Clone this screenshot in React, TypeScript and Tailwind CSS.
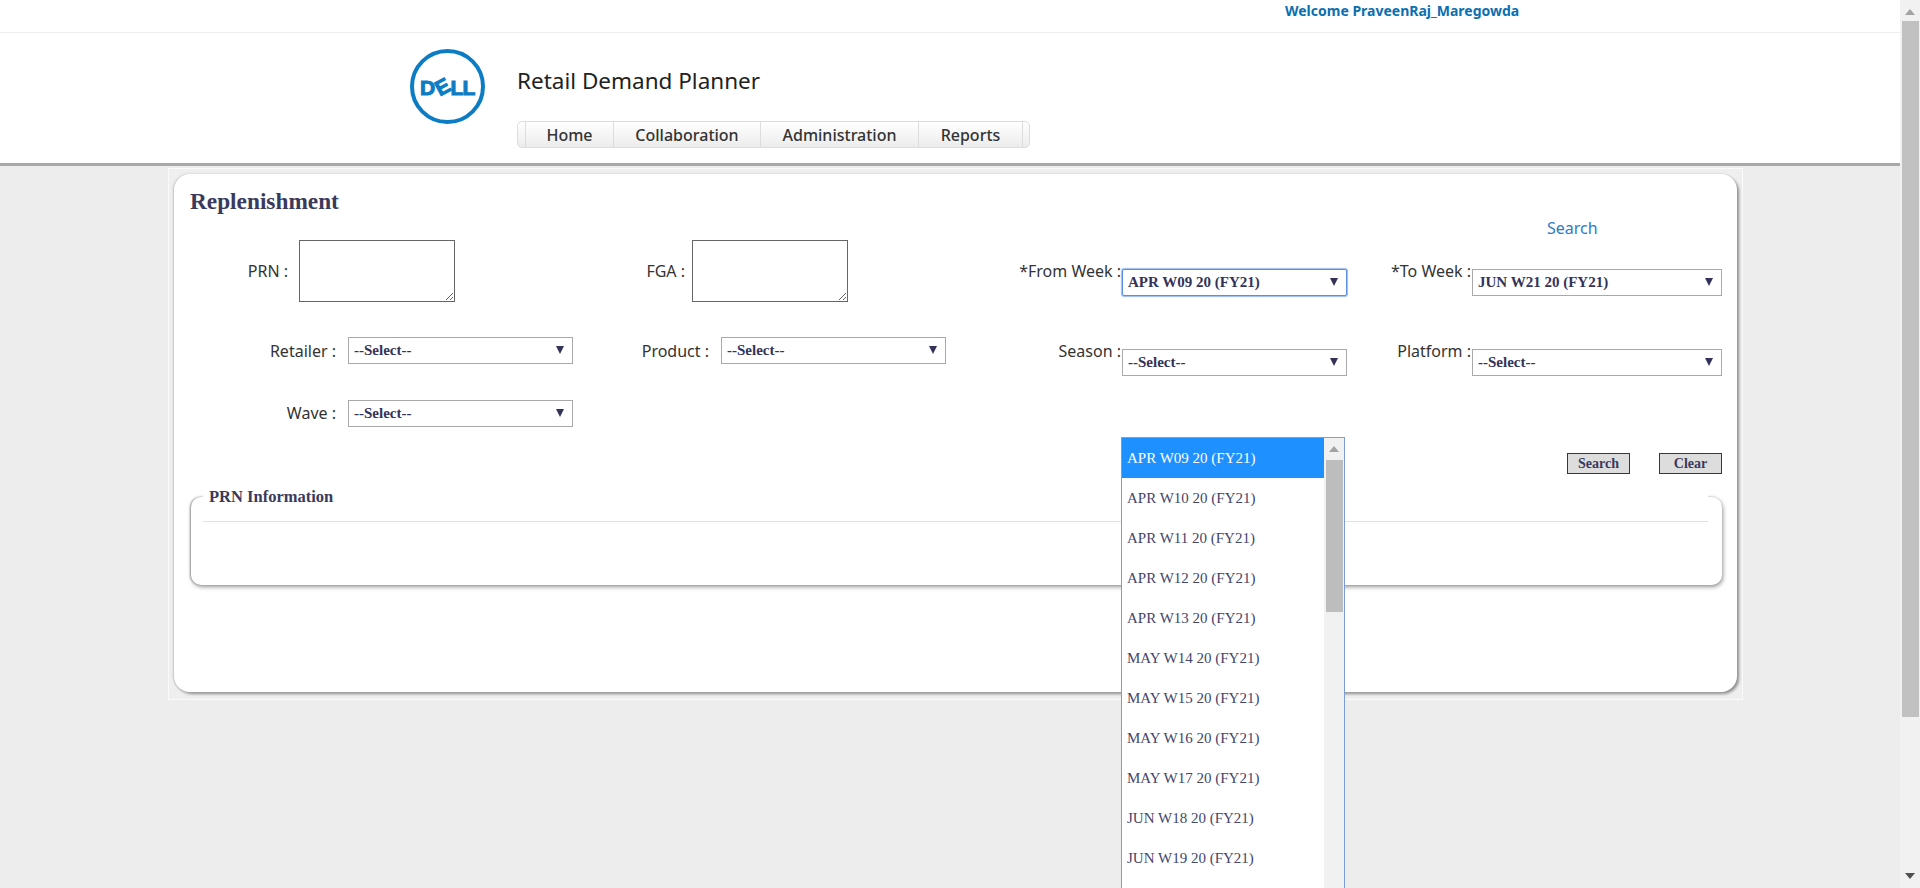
const sans = "font-['Noto_Sans',sans-serif]"
const serif = "font-['Liberation_Serif',serif]"

const weeks = [
  "APR W09 20 (FY21)",
  "APR W10 20 (FY21)",
  "APR W11 20 (FY21)",
  "APR W12 20 (FY21)",
  "APR W13 20 (FY21)",
  "MAY W14 20 (FY21)",
  "MAY W15 20 (FY21)",
  "MAY W16 20 (FY21)",
  "MAY W17 20 (FY21)",
  "JUN W18 20 (FY21)",
  "JUN W19 20 (FY21)",
]

function DellLogo() {
  return (
    <svg width="75" height="75" viewBox="0 0 75 75" className="shrink-0">
      <circle cx="37.5" cy="37.5" r="35.5" fill="none" stroke="#0c7cc4" strokeWidth="4" />
      <g fill="#0c7cc4" stroke="#0c7cc4" strokeWidth="1" fontFamily="Liberation Sans" fontWeight="700" fontSize="21">
        <text x="10" y="45.5">D</text>
        <text x="0" y="7.5" textAnchor="middle" transform="translate(32.5 37.5) rotate(-28)">E</text>
        <text x="40.5" y="45.5">L</text>
        <text x="52.5" y="45.5">L</text>
      </g>
    </svg>
  )
}

function Select({ value, widthClass, focused }: { value: string; widthClass: string; focused?: boolean }) {
  return (
    <div className={`relative h-[27px] shrink-0 ${widthClass}`}>
      <select
        defaultValue={value}
        className={`h-full w-full appearance-none bg-white pl-[5px] ${serif} text-[15px] font-bold text-[#33335a] outline-none border ${
          focused ? "border-[#5b8fe0] rounded-[2px] shadow-[0_0_1px_1px_#9cbcf0]" : "border-[#a9a9a9]"
        }`}
      >
        <option>{value}</option>
      </select>
      <svg width="8" height="8" viewBox="0 0 8 8" className="absolute right-[9px] top-[9px]">
        <path d="M0 0h8L4 8z" fill="#33335a" />
      </svg>
    </div>
  )
}

function Label({ text, className }: { text: string; className: string }) {
  return <label className={`${sans} shrink-0 text-[16px] leading-[20px] text-[#333] text-right whitespace-nowrap ${className}`}>{text}</label>
}

function Notes() {
  return <textarea className="h-[62px] w-[156px] border border-[#666] bg-white" />
}

export default function App() {
  return (
    <div className="flex h-[888px] w-[1920px] overflow-hidden bg-[#ededed]">
      <div className="relative w-[1900px] shrink-0">
        {/* Top bar */}
        <div className="h-[33px] border-b border-[#eeeeee] bg-white">
          <p className={`${sans} pl-[1285px] pt-[1px] text-[14px] font-bold leading-[20px] text-[#0b6fb0]`}>
            Welcome PraveenRaj_Maregowda
          </p>
        </div>

        {/* Header */}
        <div className="flex h-[133px] border-b-[3px] border-[#a8a8a8] bg-white pl-[410px] pt-[16px]">
          <DellLogo />
          <div className="ml-[32px]">
            <h1 className={`${sans} pt-[17px] text-[22.5px] leading-[30px] text-[#222]`}>Retail Demand Planner</h1>
            <nav className={`mt-[25px] flex h-[27px] w-[513px] rounded-[5px] border border-[#dddddd] bg-gradient-to-b from-white to-[#ececec] pl-[7px] ${sans} text-[16px] font-medium leading-[26px] text-[#333]`}>
              <a className="w-[89px] border-x border-[#dddddd] text-center">Home</a>
              <a className="w-[147px] border-r border-[#dddddd] text-center">Collaboration</a>
              <a className="w-[158px] border-r border-[#dddddd] text-center">Administration</a>
              <a className="w-[104px] border-r border-[#dddddd] text-center">Reports</a>
            </nav>
          </div>
        </div>

        {/* Frame round the panel */}
        <div className="ml-[168px] mt-[2px] h-[532px] w-[1575px] border border-[#fafafa] bg-[#efefef] px-[5px] pt-[5px]">
          <div className="h-[518px] w-[1563px] rounded-[16px] bg-white shadow-[-1px_0_2px_#c4c4c4,2px_2px_3px_#8c8c8c]">
            <div className="relative h-full pl-[16px] pt-[14px]">
              <div className="flex h-[52px]">
                <h2 className={`${serif} w-[149px] whitespace-nowrap text-[23.3px] font-bold leading-[26px] text-[#3a3a5c]`}>Replenishment</h2>
                <a className={`${sans} ml-[1208px] mt-[30px] text-[16px] leading-[20px] text-[#2f7ac4]`}>Search</a>
              </div>

              {/* Search form */}
              <div className="grid grid-cols-[370px_440px_380px_350px] grid-rows-[97px_63px_53px]">
                <div className="flex">
                  <Label text="PRN :" className="mt-[21px] w-[98px]" />
                  <div className="ml-[11px]"><Notes /></div>
                </div>
                <div className="flex">
                  <Label text="FGA :" className="mt-[21px] w-[125px]" />
                  <div className="ml-[7px]"><Notes /></div>
                </div>
                <div className="flex">
                  <Label text="*From Week :" className="mt-[21px] w-[121px]" />
                  <div className="ml-[1px] mt-[29px]"><Select value="APR W09 20 (FY21)" widthClass="w-[225px]" focused /></div>
                </div>
                <div className="flex">
                  <Label text="*To Week :" className="mt-[21px] w-[91px]" />
                  <div className="ml-[1px] mt-[29px]"><Select value="JUN W21 20 (FY21)" widthClass="w-[250px]" /></div>
                </div>

                <div className="flex">
                  <Label text="Retailer :" className="mt-[4px] w-[146px]" />
                  <div className="ml-[12px]"><Select value="--Select--" widthClass="w-[225px]" /></div>
                </div>
                <div className="flex">
                  <Label text="Product :" className="mt-[4px] w-[149px]" />
                  <div className="ml-[12px]"><Select value="--Select--" widthClass="w-[225px]" /></div>
                </div>
                <div className="flex">
                  <Label text="Season :" className="mt-[4px] w-[121px]" />
                  <div className="ml-[1px] mt-[12px]"><Select value="--Select--" widthClass="w-[225px]" /></div>
                </div>
                <div className="flex">
                  <Label text="Platform :" className="mt-[4px] w-[91px]" />
                  <div className="ml-[1px] mt-[12px]"><Select value="--Select--" widthClass="w-[250px]" /></div>
                </div>

                <div className="flex">
                  <Label text="Wave :" className="mt-[3px] w-[146px]" />
                  <div className="ml-[12px]"><Select value="--Select--" widthClass="w-[225px]" /></div>
                </div>
              </div>

              {/* Buttons */}
              <div className="flex w-[1532px] justify-end gap-[29px]">
                <button className={`h-[21px] w-[63px] border border-[#33335a] bg-[#dddddd] ${serif} text-[14px] font-bold leading-[18px] text-[#3a3a5c]`}>Search</button>
                <button className={`h-[21px] w-[63px] border border-[#33335a] bg-[#dddddd] ${serif} text-[14px] font-bold leading-[18px] text-[#3a3a5c]`}>Clear</button>
              </div>

              {/* PRN Information */}
              <div className="relative ml-[1px] mt-[23px] h-[88px] w-[1531px] rounded-[10px] bg-white shadow-[-1px_0_2px_#999,1px_2px_4px_#999]">
                <div className="absolute -top-[13px] left-[12px] h-[38px] w-[1505px] border-b border-[#e2e2e2] bg-white pl-[6px]">
                  <span className={`${serif} text-[16.5px] font-bold leading-[18px] text-[#3a3a5c]`}>PRN Information</span>
                </div>
              </div>
            </div>
          </div>
        </div>

        {/* Open week list */}
        <div className="absolute left-[1121px] top-[437px] flex h-[480px] w-[224px] border-x border-t border-[#7b9bd9] bg-white">
          <ul className="w-[202px]">
            {weeks.map((week, i) => (
              <li
                key={week}
                className={`h-[40px] pl-[5px] ${serif} text-[15px] leading-[41px] ${
                  i === 0 ? "bg-[#1e90ff] text-white" : "text-[#45456a]"
                }`}
              >
                {week}
              </li>
            ))}
          </ul>
          <div className="flex w-[20px] flex-col items-center bg-[#f1f1f1] pt-[8px]">
            <svg width="10" height="6" viewBox="0 0 10 6"><path d="M5 0l5 6H0z" fill="#a3a3a3" /></svg>
            <div className="mt-[8px] h-[152px] w-[17px] bg-[#bdbdbd]" />
          </div>
        </div>
      </div>

      {/* Page scrollbar */}
      <div className="flex w-[20px] shrink-0 flex-col items-center bg-[#f1f1f1] pt-[9px]">
        <svg width="10" height="6" viewBox="0 0 10 6"><path d="M5 0l5 6H0z" fill="#a3a3a3" /></svg>
        <div className="mt-[6px] h-[696px] w-[17px] bg-[#c1c1c1]" />
        <svg width="10" height="6" viewBox="0 0 10 6" className="mt-[156px]"><path d="M0 0h10L5 6z" fill="#505050" /></svg>
      </div>
    </div>
  )
}
